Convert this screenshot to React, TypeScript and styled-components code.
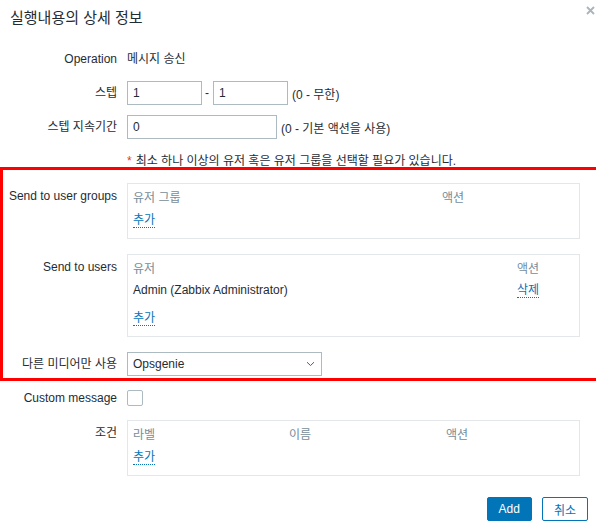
import styled, { createGlobalStyle } from "styled-components";

const GlobalStyle = createGlobalStyle`
    html, body {
        margin: 0;
        padding: 0;
        background: #ffffff;
    }
    body {
        font-family: "Liberation Sans", Arial, "Noto Sans CJK KR", sans-serif;
        font-size: 12px;
        color: #1f2c33;
    }
    * {
        box-sizing: border-box;
    }
`;

const Dialog = styled.div`
    width: 596px;
    height: 529px;
    background: #fff;
`;

const Header = styled.div`
    display: flex;
    justify-content: space-between;
    align-items: flex-start;
    height: 37px;
    padding-left: 10px;
`;

const Title = styled.h4`
    margin: 0;
    font-size: 15px;
    font-weight: normal;
    line-height: 36px;
    color: #1f2c33;
`;

const CloseButton = styled.button`
    width: 12px;
    height: 12px;
    margin-top: 4px;
    padding: 0;
    border: none;
    background: transparent;
    display: flex;
    align-items: center;
    justify-content: center;
    cursor: pointer;
`;

const Form = styled.div`
    display: grid;
    grid-template-columns: 117px 453px;
    column-gap: 10px;
    row-gap: 10px;
    padding-top: 10px;
`;

// the red annotation frame drawn around the recipient rows
const Marked = styled.div`
    grid-column: 1 / -1;
    display: grid;
    grid-template-columns: 117px 453px;
    column-gap: 10px;
    row-gap: 10px;
    position: relative;

    &::after {
        content: "";
        position: absolute;
        left: 0;
        top: -16px;
        width: 594px;
        height: 208px;
        border: 3px solid #ff0000;
        pointer-events: none;
    }
`;

const Label = styled.div<{ $top?: boolean }>`
    text-align: right;
    line-height: 24px;
    white-space: nowrap;
    align-self: ${({ $top }) => ($top ? "start" : "center")};
    padding-top: ${({ $top }) => ($top ? "1px" : "0")};
`;

const Field = styled.div`
    display: flex;
    align-items: center;
    min-height: 24px;
`;

const PlainValue = styled.span`
    line-height: 24px;
`;

const TextInput = styled.input<{ $width: number }>`
    width: ${({ $width }) => $width}px;
    height: 24px;
    padding: 0 5px;
    border: 1px solid #acbbc2;
    border-radius: 0;
    font: inherit;
    color: #1f2c33;
    background: #fff;
    outline: none;
`;

const Dash = styled.span`
    margin: 0 4px 0 3px;
`;

const Hint = styled.span`
    margin-left: 4px;
`;

const Required = styled.span`
    line-height: 24px;

    &::before {
        content: "*";
        color: #e33734;
        margin-right: 4px;
    }
`;

const TableBox = styled.div<{ $gapBelow?: boolean }>`
    width: 453px;
    border: 1px solid #e3e7ea;
    padding: 0 5px 6px;
    margin-bottom: ${({ $gapBelow }) => ($gapBelow ? "5px" : "0")};
`;

const TableRow = styled.div<{ $cols: string; $height?: number; $spaced?: boolean }>`
    display: grid;
    grid-template-columns: ${({ $cols }) => $cols};
    align-items: center;
    height: ${({ $height }) => $height ?? 24}px;
    margin-top: ${({ $spaced }) => ($spaced ? "5px" : "0")};
`;

const HeadCell = styled.span`
    color: #768d99;
`;

const LinkButton = styled.a`
    justify-self: start;
    color: #0275b8;
    text-decoration: none;
    border-bottom: 1px dotted #0275b8;
    line-height: 14px;
    cursor: pointer;
`;

const SelectBox = styled.div`
    width: 195px;
    height: 24px;
    display: flex;
    align-items: center;
    justify-content: space-between;
    padding: 0 6px 0 5px;
    border: 1px solid #acbbc2;
    background: #fff;
`;

const CheckBox = styled.span`
    display: inline-block;
    width: 16px;
    height: 16px;
    border: 1px solid #acbbc2;
    border-radius: 2px;
    background: #fff;
`;

const Footer = styled.div`
    display: flex;
    justify-content: flex-end;
    gap: 10px;
    padding: 21px 8px 0 0;
`;

const Button = styled.button<{ $primary?: boolean }>`
    height: 24px;
    padding: 0 11px;
    border: 1px solid #0275b8;
    border-radius: 2px;
    font: inherit;
    background: ${({ $primary }) => ($primary ? "#0275b8" : "#fff")};
    color: ${({ $primary }) => ($primary ? "#fff" : "#0275b8")};
    cursor: pointer;
`;

const Chevron = () => (
    <svg width="9" height="6" viewBox="0 0 9 6">
        <path d="M1 1.2 L4.5 4.5 L8 1.2" fill="none" stroke="#4f5f68" strokeWidth="1" />
    </svg>
);

const CloseIcon = () => (
    <svg width="9" height="9" viewBox="0 0 9 9">
        <path d="M1 1 L8 8 M8 1 L1 8" stroke="#aab4ba" strokeWidth="1.8" />
    </svg>
);

const App = () => {
    return (
        <>
            <GlobalStyle />
            <Dialog>
                <Header>
                    <Title>실행내용의 상세 정보</Title>
                    <CloseButton type="button" title="닫기">
                        <CloseIcon />
                    </CloseButton>
                </Header>

                <Form>
                    <Label>Operation</Label>
                    <Field>
                        <PlainValue>메시지 송신</PlainValue>
                    </Field>

                    <Label>스텝</Label>
                    <Field>
                        <TextInput $width={75} defaultValue="1" />
                        <Dash>-</Dash>
                        <TextInput $width={75} defaultValue="1" />
                        <Hint>(0 - 무한)</Hint>
                    </Field>

                    <Label>스텝 지속기간</Label>
                    <Field>
                        <TextInput $width={150} defaultValue="0" />
                        <Hint>(0 - 기본 액션을 사용)</Hint>
                    </Field>

                    <div />
                    <Field>
                        <Required>최소 하나 이상의 유저 혹은 유저 그룹을 선택할 필요가 있습니다.</Required>
                    </Field>

                    <Marked>
                        <Label $top>Send to user groups</Label>
                        <TableBox $gapBelow>
                            <TableRow $cols="309px 1fr">
                                <HeadCell>유저 그룹</HeadCell>
                                <HeadCell>액션</HeadCell>
                            </TableRow>
                            <TableRow $cols="1fr">
                                <LinkButton>추가</LinkButton>
                            </TableRow>
                        </TableBox>

                        <Label $top>Send to users</Label>
                        <TableBox $gapBelow>
                            <TableRow $cols="384px 1fr">
                                <HeadCell>유저</HeadCell>
                                <HeadCell>액션</HeadCell>
                            </TableRow>
                            <TableRow $cols="384px 1fr" $height={22}>
                                <span>Admin (Zabbix Administrator)</span>
                                <LinkButton>삭제</LinkButton>
                            </TableRow>
                            <TableRow $cols="1fr" $spaced>
                                <LinkButton>추가</LinkButton>
                            </TableRow>
                        </TableBox>

                        <Label>다른 미디어만 사용</Label>
                        <Field>
                            <SelectBox>
                                <span>Opsgenie</span>
                                <Chevron />
                            </SelectBox>
                        </Field>
                    </Marked>

                    <Label>Custom message</Label>
                    <Field>
                        <CheckBox />
                    </Field>

                    <Label $top>조건</Label>
                    <TableBox>
                        <TableRow $cols="156px 157px 1fr">
                            <HeadCell>라벨</HeadCell>
                            <HeadCell>이름</HeadCell>
                            <HeadCell>액션</HeadCell>
                        </TableRow>
                        <TableRow $cols="1fr">
                            <LinkButton>추가</LinkButton>
                        </TableRow>
                    </TableBox>
                </Form>

                <Footer>
                    <Button type="button" $primary>Add</Button>
                    <Button type="button">취소</Button>
                </Footer>
            </Dialog>
        </>
    );
};

export default App;
